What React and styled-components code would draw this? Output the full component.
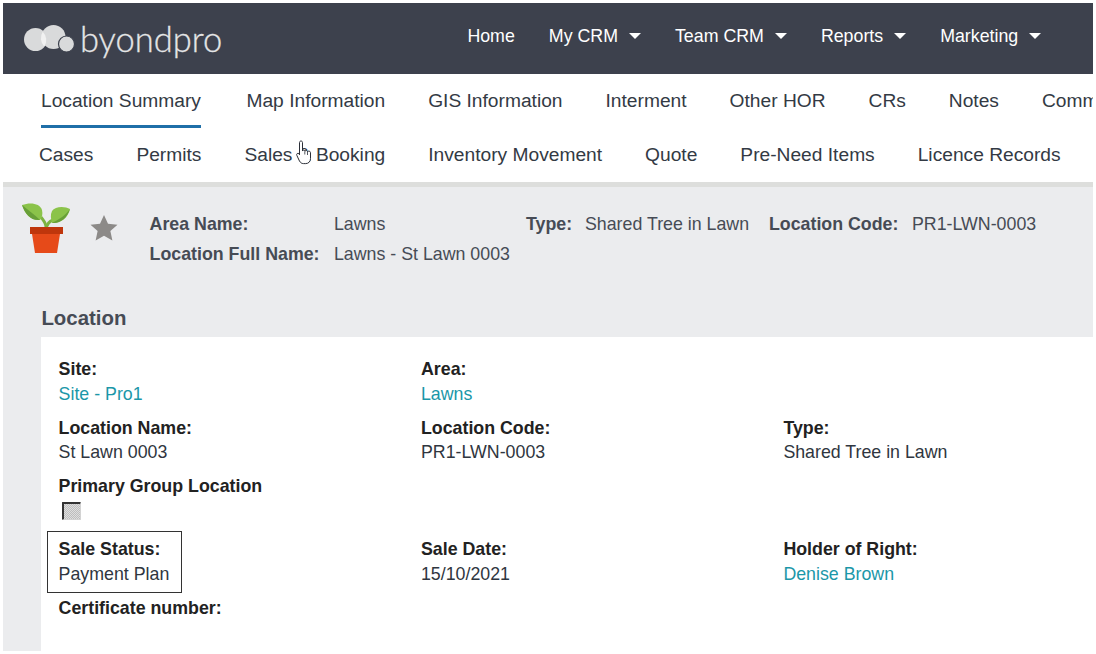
import React from "react";
import styled, { createGlobalStyle } from "styled-components";

const Global = createGlobalStyle`
  html, body { margin: 0; padding: 0; background: #fff; overflow: hidden; }
  body { font-family: "Liberation Sans", Arial, sans-serif; }
  * { box-sizing: border-box; }
`;
const Frame = styled.div`
  width: 1096px; height: 654px; padding: 3px; overflow: hidden;
`;
const Page = styled.div`
  width: 1090px; height: 648px; overflow: hidden; display: flex; flex-direction: column; position: relative; background: #fff;
`;
const Header = styled.header`
  height: 71px; flex: none; background: #3d414d; display: flex; align-items: center; padding-left: 21px;
`;
const Logo = styled.div`
  display: flex; align-items: center; width: 443.4px; flex: none;
`;
const LogoText = styled.span`
  font-family: Lato, sans-serif; font-weight: 300; font-size: 34.5px; line-height: 40px; color: #e4e5e6; margin-left: 4px;
  -webkit-text-stroke: 0.3px #e4e5e6;
`;
const MainNav = styled.nav`
  display: flex; align-items: center; gap: 34px; height: 100%; padding-bottom: 5px;
`;
const NavItem = styled.a`
  color: #fff; font-size: 17.8px; display: flex; align-items: center; gap: 11px;
`;
const Caret = styled.i`
  display: block; width: 0; height: 0; border-left: 6px solid transparent; border-right: 6px solid transparent; border-top: 6px solid #fff;
`;
const TabRow = styled.div`
  display: flex; flex: none; height: 54px; padding-left: ${p => p.$inset}px; gap: ${p => p.$gap}px; white-space: nowrap;
`;
const Tab = styled.a`
  font-size: 19.2px; color: #333a44; height: 54px; line-height: 53px; flex: none; position: relative;
  ${p => p.$active && `border-bottom: 3px solid #1f6fa8; margin-right: 2.5px;`}
`;
const Divider = styled.div`
  height: 5px; flex: none; background: #dddedc;
`;
const Content = styled.main`
  flex: 1; background: #ebecee; display: flex; flex-direction: column; min-height: 0;
`;
const Summary = styled.section`
  display: flex; height: 122px; flex: none; padding: 15px 0 0 19px;
`;
const IconCol = styled.div`
  display: flex; width: 127.6px; flex: none; align-items: flex-start;
`;
const Star = styled.svg`
  width: 30px; height: 30px; margin: 11px 0 0 19px;
`;
const SummaryGrid = styled.div`
  display: grid; grid-template-columns: 184.4px 192px 59px 184px 143px auto; grid-auto-rows: 30px; font-size: 17.8px; color: #464b55; padding-top: 7px; align-items: center; white-space: nowrap;
`;
const SumLabel = styled.b`
  font-weight: 700; color: #464b55;
`;
const WideValue = styled.span`
  grid-column: 2 / span 2;
`;
const SectionTitle = styled.h2`
  margin: 0; padding: 0 0 0 38.400px; font-size: 20.4px; font-weight: 700; color: #464b55; height: 28px; line-height: 19px; flex: none;
`;
const Panel = styled.div`
  flex: 1; margin-left: 38px; background: #fff; padding: 20px 0 0 17.600px; position: relative;
`;
const FieldGrid = styled.div`
  display: grid; grid-template-columns: 362.4px 362.4px 1fr; row-gap: 9.5px;
`;
const Field = styled.div`
  height: ${p => p.$tall ? 53.5 : 49}px; font-size: 17.8px; line-height: 24.5px; color: #2f3640;
`;
const Label = styled.div`
  font-weight: 700; color: #222;
`;
const Link = styled.a`
  color: #1b97a8;
`;
const Check = styled.div`
  width: 19px; height: 18px; margin: 3.500px 0 0 3px; border: 1px solid #d3d3d3; border-top: 2px solid #333; border-left: 2px solid #333; border-radius: 1px;
  background: repeating-conic-gradient(#bdbdbd 0 25%, #dedede 0 50%) 0 0 / 2px 2px;
`;
const Highlight = styled.div`
  position: absolute; left: 6px; top: 194px; width: 135px; height: 62px; border: 1px solid #333; pointer-events: none;
`;
const Cursor = styled.svg`
  position: absolute; left: 293px; top: 137px; width: 17px; height: 25px;
`;

const nav = [["Home", false], ["My CRM", true], ["Team CRM", true], ["Reports", true], ["Marketing", true]];
const tabs1 = ["Location Summary", "Map Information", "GIS Information", "Interment", "Other HOR", "CRs", "Notes", "Comms"];
const tabs2 = ["Cases", "Permits", "Sales & Booking", "Inventory Movement", "Quote", "Pre-Need Items", "Licence Records"];

export default function App() {
  return (
    <Frame>
      <Global />
      <Page>
        <Header>
          <Logo>
            <svg width="52" height="28" viewBox="0 0 52 28">
              <circle cx="11.500" cy="14.500" r="11.500" fill="#d9dadb" />
              <circle cx="29.500" cy="12" r="12" fill="#d9dadb" />
              <path d="M18.700 6.800a11.500 11.500 0 0 1 1.600 14.700a12 12 0 0 1-1.600-14.700z" fill="#f1f1f1" />
              <circle cx="42.500" cy="19" r="8" fill="#d9dadb" stroke="#3d414d" strokeWidth="1.200" />
            </svg>
            <LogoText>byondpro</LogoText>
          </Logo>
          <MainNav>
            {nav.map(([t, c]) => (
              <NavItem key={t}>{t}{c && <Caret />}</NavItem>
            ))}
          </MainNav>
        </Header>
        <TabRow $inset={38} $gap={43}>
          {tabs1.map((t, i) => <Tab key={t} $active={i === 0}>{t}</Tab>)}
        </TabRow>
        <TabRow $inset={36} $gap={43}>
          {tabs2.map(t => <Tab key={t}>{t}</Tab>)}
        </TabRow>
        <Divider />
        <Content>
          <Summary>
            <IconCol>
              <svg width="48" height="52" viewBox="0 0 48 52">
                <path d="M24 30V25C24 21 21 18 19 15" fill="none" stroke="#7cb342" strokeWidth="3" />
                <path d="M24 27c1-5 4-8 7-9" fill="none" stroke="#7cb342" strokeWidth="3" />
                <path d="M0 3C8 0 18 1 20 8c1 4 0 8-2 10C9 19 3 12 0 3z" fill="#8bc34a" />
                <path d="M0 3C6 8 13 13 18 18C9 19 3 12 0 3z" fill="#689f38" />
                <path d="M48 7c-5-3-15-3-18 2c-2 4-1 8 0 12c8 1 16-5 18-14z" fill="#8bc34a" />
                <path d="M48 7C43 14 36 18 30 21C38 22 45 16 48 7z" fill="#689f38" />
                <path d="M10 32h28l-3 19H13z" fill="#e64a19" />
                <rect x="8" y="25" width="33" height="7" fill="#bf360c" />
              </svg>
              <Star viewBox="0 0 24 24"><path d="M12 1.500l3.200 7 7.600.8-5.700 5.100 1.600 7.500L12 18.100l-6.700 3.800 1.600-7.500L1.200 9.300l7.600-.8z" fill="#8c8a88" /></Star>
            </IconCol>
            <SummaryGrid>
              <SumLabel>Area Name:</SumLabel>
              <span>Lawns</span>
              <SumLabel>Type:</SumLabel>
              <span>Shared Tree in Lawn</span>
              <SumLabel>Location Code:</SumLabel>
              <span>PR1-LWN-0003</span>
              <SumLabel>Location Full Name:</SumLabel>
              <WideValue>Lawns - St Lawn 0003</WideValue>
            </SummaryGrid>
          </Summary>
          <SectionTitle>Location</SectionTitle>
          <Panel>
            <FieldGrid>
              <Field><Label>Site:</Label><Link>Site - Pro1</Link></Field>
              <Field><Label>Area:</Label><Link>Lawns</Link></Field>
              <Field />
              <Field><Label>Location Name:</Label>St Lawn 0003</Field>
              <Field><Label>Location Code:</Label>PR1-LWN-0003</Field>
              <Field><Label>Type:</Label>Shared Tree in Lawn</Field>
              <Field $tall><Label>Primary Group Location</Label><Check /></Field>
              <Field $tall />
              <Field $tall />
              <Field><Label>Sale Status:</Label>Payment Plan</Field>
              <Field><Label>Sale Date:</Label>15/10/2021</Field>
              <Field><Label>Holder of Right:</Label><Link>Denise Brown</Link></Field>
              <Field><Label>Certificate number:</Label></Field>
            </FieldGrid>
            <Highlight />
          </Panel>
        </Content>
        <Cursor viewBox="0 0 17 25">
          <path d="M3.500 2.500c0-2 3-2 3 0V11c0-1.200 2.500-1.200 2.500.3 0-1.200 2.500-1.200 2.500.5 0-1 3-1 3 .8v6c0 3-2 5-4.800 5H7.500c-2 0-3-1-4-2.500L.9 15.500c-1-1.600 1-3 2.200-1.700l.4 1z" fill="#fff" stroke="#2b2f38" strokeWidth="1" />
          <path d="M8.800 11.500v3M11.500 12v3" stroke="#2b2f38" strokeWidth=".8" fill="none" />
        </Cursor>
      </Page>
    </Frame>
  );
}
